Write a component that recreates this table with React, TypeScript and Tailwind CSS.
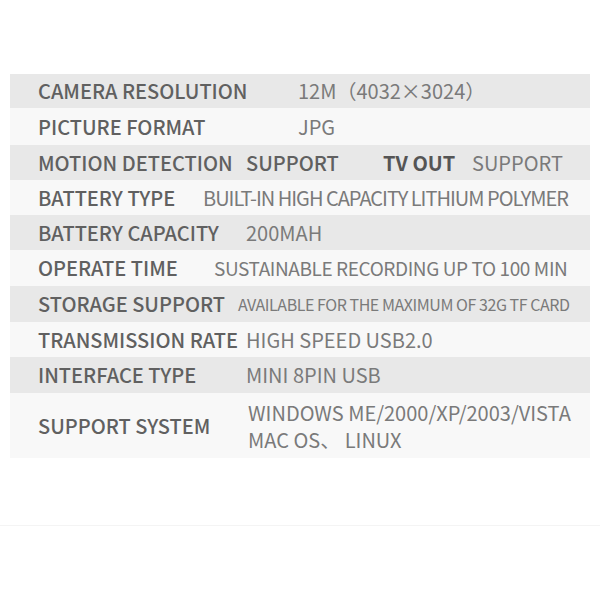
import React from "react";

type Row = {
  label: string;
  value: React.ReactNode;
  shade: boolean;
  h: string;
  labelW: string;
  valueCls: string;
};

const rows: Row[] = [
  {
    label: "CAMERA RESOLUTION",
    value: "12M（4032×3024）",
    shade: true,
    h: "h-[34px]",
    labelW: "w-[260px]",
    valueCls: "text-[20px]",
  },
  {
    label: "PICTURE FORMAT",
    value: "JPG",
    shade: false,
    h: "h-[37px]",
    labelW: "w-[260px]",
    valueCls: "text-[20px]",
  },
  {
    label: "MOTION DETECTION",
    value: (
      <span className="flex items-center">
        <span className="w-[137px] font-medium text-[#606060]">SUPPORT</span>
        <span className="w-[89px] font-bold text-[#555]">TV OUT</span>
        <span>SUPPORT</span>
      </span>
    ),
    shade: true,
    h: "h-[35px]",
    labelW: "w-[208px]",
    valueCls: "text-[20px]",
  },
  {
    label: "BATTERY TYPE",
    value: "BUILT-IN HIGH CAPACITY LITHIUM POLYMER",
    shade: false,
    h: "h-[35px]",
    labelW: "w-[165px]",
    valueCls: "text-[20px] tracking-[-1px]",
  },
  {
    label: "BATTERY CAPACITY",
    value: "200MAH",
    shade: true,
    h: "h-[35px]",
    labelW: "w-[208px]",
    valueCls: "text-[20px]",
  },
  {
    label: "OPERATE TIME",
    value: "SUSTAINABLE RECORDING UP TO 100 MIN",
    shade: false,
    h: "h-[36px]",
    labelW: "w-[176px]",
    valueCls: "text-[19px] tracking-[-0.4px]",
  },
  {
    label: "STORAGE SUPPORT",
    value: "AVAILABLE FOR THE MAXIMUM OF 32G TF CARD",
    shade: true,
    h: "h-[36px]",
    labelW: "w-[200px]",
    valueCls: "text-[16px] tracking-[-0.45px]",
  },
  {
    label: "TRANSMISSION RATE",
    value: "HIGH SPEED USB2.0",
    shade: false,
    h: "h-[35px]",
    labelW: "w-[208px]",
    valueCls: "text-[20px]",
  },
  {
    label: "INTERFACE TYPE",
    value: "MINI 8PIN USB",
    shade: true,
    h: "h-[36px]",
    labelW: "w-[208px]",
    valueCls: "text-[20px]",
  },
  {
    label: "SUPPORT SYSTEM",
    value: (
      <span className="flex flex-col leading-[27px]">
        <span>WINDOWS ME/2000/XP/2003/VISTA</span>
        <span>MAC OS、 LINUX</span>
      </span>
    ),
    shade: false,
    h: "h-[65px]",
    labelW: "w-[210px]",
    valueCls: "text-[20px]",
  },
];

export default function App() {
  return (
    <div
      className="w-[600px] h-[600px] bg-white pt-[74px]"
      style={{ fontFamily: '"Noto Sans CJK SC", "Noto Sans", sans-serif' }}
    >
      <div className="mx-[10px]">
        {rows.map((r) => (
          <div
            key={r.label}
            className={`flex items-center pl-[28px] whitespace-nowrap ${r.h} ${
              r.shade ? "bg-[#e8e8e8]" : "bg-[#f8f8f8]"
            }`}
          >
            <span className={`shrink-0 text-[20px] font-medium text-[#606060] ${r.labelW}`}>
              {r.label}
            </span>
            <span className={`text-[#7a7a7a] ${r.valueCls}`}>{r.value}</span>
          </div>
        ))}
      </div>
      <div className="mt-[67px] border-t border-[#f4f4f4]" />
    </div>
  );
}
